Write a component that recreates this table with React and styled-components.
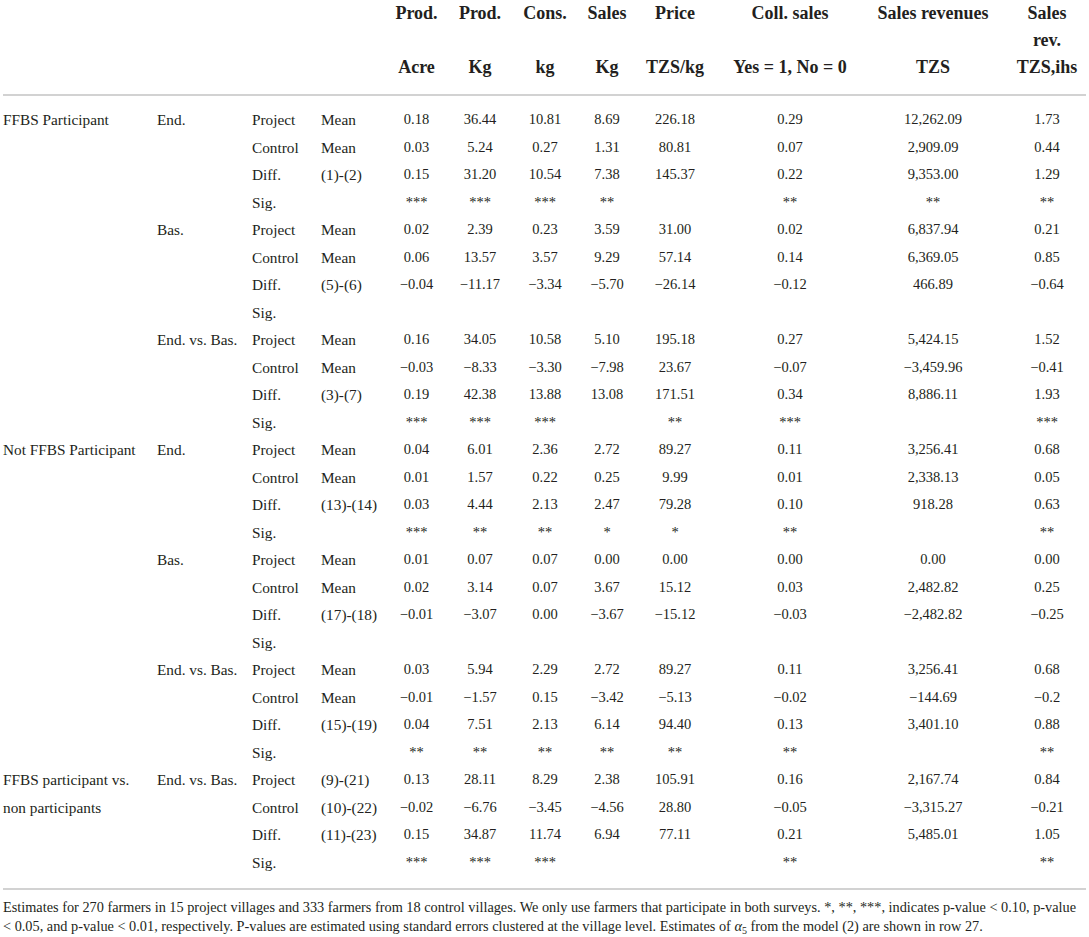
import React from "react";
import styled, { createGlobalStyle } from "styled-components";

const GlobalStyle = createGlobalStyle`
  html, body { margin: 0; padding: 0; background: #ffffff; }
  body {
    font-family: "Liberation Serif", "Times New Roman", serif;
    color: #231f20;
  }
`;

const Page = styled.div`
  padding: 0 3px;
  width: 1083px;
`;

const Table = styled.table`
  width: 1083px;
  table-layout: fixed;
  border-collapse: collapse;
`;

const Col = styled.col`
  width: ${(p) => p.$w}px;
`;

const HeadCell = styled.th`
  padding: 0 0 13px ${(p) => p.$pl || 0}px;
  border-bottom: 2px solid #d2d2d2;
  vertical-align: top;
  font-weight: 700;
  font-size: 18px;
  line-height: 27px;
  text-align: center;
`;

const HeadStack = styled.div`
  display: flex;
  flex-direction: column;
  justify-content: space-between;
  align-items: center;
  height: 81px;
  white-space: nowrap;
`;

const Row = styled.tr`
  & > td {
    padding-top: ${(p) => (p.$first ? 10 : 0)}px;
    padding-bottom: ${(p) => (p.$last ? 12 : 0)}px;
  }
`;

const LabelCell = styled.td`
  text-align: left;
  vertical-align: top;
  font-size: 15.3px;
  line-height: 27.5px;
  padding-left: 0;
  padding-right: ${(p) => p.$pr || 0}px;
`;

const NumCell = styled.td`
  text-align: center;
  vertical-align: top;
  font-size: 14.5px;
  line-height: 27.5px;
  white-space: nowrap;
  padding-left: ${(p) => p.$pl || 0}px;
  padding-right: 0;
`;

const Footnote = styled.p`
  margin: 0;
  border-top: 2px solid #d2d2d2;
  padding-top: 8px;
  font-size: 14.3px;
  line-height: 19px;
`;

const Alpha = styled.i`
  font-style: italic;
`;

const Sub = styled.sub`
  font-size: 10px;
  line-height: 0;
  vertical-align: -3px;
`;

const widths = [154, 95, 69, 64, 63, 64, 66, 58, 78, 152, 134, 86];

const headers = [
  { name: ["Prod."], unit: "Acre" },
  { name: ["Prod."], unit: "Kg" },
  { name: ["Cons."], unit: "kg" },
  { name: ["Sales"], unit: "Kg" },
  { name: ["Price"], unit: "TZS/kg" },
  { name: ["Coll. sales"], unit: "Yes = 1, No = 0" },
  { name: ["Sales revenues"], unit: "TZS" },
  { name: ["Sales", "rev."], unit: "TZS,ihs" },
];

const blank = ["", "", "", "", "", "", "", ""];

const groups = [
  {
    label: "FFBS Participant",
    subs: [
      {
        period: "End.",
        rows: [
          ["Project", "Mean", "0.18", "36.44", "10.81", "8.69", "226.18", "0.29", "12,262.09", "1.73"],
          ["Control", "Mean", "0.03", "5.24", "0.27", "1.31", "80.81", "0.07", "2,909.09", "0.44"],
          ["Diff.", "(1)-(2)", "0.15", "31.20", "10.54", "7.38", "145.37", "0.22", "9,353.00", "1.29"],
          ["Sig.", "", "***", "***", "***", "**", "", "**", "**", "**"],
        ],
      },
      {
        period: "Bas.",
        rows: [
          ["Project", "Mean", "0.02", "2.39", "0.23", "3.59", "31.00", "0.02", "6,837.94", "0.21"],
          ["Control", "Mean", "0.06", "13.57", "3.57", "9.29", "57.14", "0.14", "6,369.05", "0.85"],
          ["Diff.", "(5)-(6)", "−0.04", "−11.17", "−3.34", "−5.70", "−26.14", "−0.12", "466.89", "−0.64"],
          ["Sig.", "", ...blank],
        ],
      },
      {
        period: "End. vs. Bas.",
        rows: [
          ["Project", "Mean", "0.16", "34.05", "10.58", "5.10", "195.18", "0.27", "5,424.15", "1.52"],
          ["Control", "Mean", "−0.03", "−8.33", "−3.30", "−7.98", "23.67", "−0.07", "−3,459.96", "−0.41"],
          ["Diff.", "(3)-(7)", "0.19", "42.38", "13.88", "13.08", "171.51", "0.34", "8,886.11", "1.93"],
          ["Sig.", "", "***", "***", "***", "", "**", "***", "", "***"],
        ],
      },
    ],
  },
  {
    label: "Not FFBS Participant",
    subs: [
      {
        period: "End.",
        rows: [
          ["Project", "Mean", "0.04", "6.01", "2.36", "2.72", "89.27", "0.11", "3,256.41", "0.68"],
          ["Control", "Mean", "0.01", "1.57", "0.22", "0.25", "9.99", "0.01", "2,338.13", "0.05"],
          ["Diff.", "(13)-(14)", "0.03", "4.44", "2.13", "2.47", "79.28", "0.10", "918.28", "0.63"],
          ["Sig.", "", "***", "**", "**", "*", "*", "**", "", "**"],
        ],
      },
      {
        period: "Bas.",
        rows: [
          ["Project", "Mean", "0.01", "0.07", "0.07", "0.00", "0.00", "0.00", "0.00", "0.00"],
          ["Control", "Mean", "0.02", "3.14", "0.07", "3.67", "15.12", "0.03", "2,482.82", "0.25"],
          ["Diff.", "(17)-(18)", "−0.01", "−3.07", "0.00", "−3.67", "−15.12", "−0.03", "−2,482.82", "−0.25"],
          ["Sig.", "", ...blank],
        ],
      },
      {
        period: "End. vs. Bas.",
        rows: [
          ["Project", "Mean", "0.03", "5.94", "2.29", "2.72", "89.27", "0.11", "3,256.41", "0.68"],
          ["Control", "Mean", "−0.01", "−1.57", "0.15", "−3.42", "−5.13", "−0.02", "−144.69", "−0.2"],
          ["Diff.", "(15)-(19)", "0.04", "7.51", "2.13", "6.14", "94.40", "0.13", "3,401.10", "0.88"],
          ["Sig.", "", "**", "**", "**", "**", "**", "**", "", "**"],
        ],
      },
    ],
  },
  {
    label: "FFBS participant vs. non participants",
    subs: [
      {
        period: "End. vs. Bas.",
        rows: [
          ["Project", "(9)-(21)", "0.13", "28.11", "8.29", "2.38", "105.91", "0.16", "2,167.74", "0.84"],
          ["Control", "(10)-(22)", "−0.02", "−6.76", "−3.45", "−4.56", "28.80", "−0.05", "−3,315.27", "−0.21"],
          ["Diff.", "(11)-(23)", "0.15", "34.87", "11.74", "6.94", "77.11", "0.21", "5,485.01", "1.05"],
          ["Sig.", "", "***", "***", "***", "", "", "**", "", "**"],
        ],
      },
    ],
  },
];

const totalRows = groups.reduce(
  (n, g) => n + g.subs.reduce((m, s) => m + s.rows.length, 0),
  0
);

export default function App() {
  const body = [];
  let index = 0;
  groups.forEach((g, gi) => {
    const groupSpan = g.subs.reduce((m, s) => m + s.rows.length, 0);
    g.subs.forEach((s, si) => {
      s.rows.forEach((r, ri) => {
        const first = index === 0;
        const last = index === totalRows - 1;
        body.push(
          <Row key={`${gi}-${si}-${ri}`} $first={first} $last={last}>
            {si === 0 && ri === 0 && (
              <LabelCell rowSpan={groupSpan} $pr={18}>
                {g.label}
              </LabelCell>
            )}
            {ri === 0 && <LabelCell rowSpan={s.rows.length}>{s.period}</LabelCell>}
            <LabelCell>{r[0]}</LabelCell>
            <LabelCell>{r[1]}</LabelCell>
            {r.slice(2).map((v, vi) => (
              <NumCell key={vi} $pl={vi === 7 ? 8 : 0}>
                {v}
              </NumCell>
            ))}
          </Row>
        );
        index += 1;
      });
    });
  });

  return (
    <Page>
      <GlobalStyle />
      <Table>
        <colgroup>
          {widths.map((w, i) => (
            <Col key={i} $w={w} />
          ))}
        </colgroup>
        <thead>
          <tr>
            <HeadCell />
            <HeadCell />
            <HeadCell />
            <HeadCell />
            {headers.map((h, i) => (
              <HeadCell key={i} $pl={i === 7 ? 8 : 0}>
                <HeadStack>
                  <div>
                    {h.name.map((line, li) => (
                      <div key={li}>{line}</div>
                    ))}
                  </div>
                  <div>{h.unit}</div>
                </HeadStack>
              </HeadCell>
            ))}
          </tr>
        </thead>
        <tbody>{body}</tbody>
      </Table>
      <Footnote>
        Estimates for 270 farmers in 15 project villages and 333 farmers from 18 control villages. We only use farmers that participate in both surveys. *, **, ***, indicates p-value &lt; 0.10, p-value{" "}
        {"<\u00a00.05,"} and p-value &lt; 0.01, respectively. P-values are estimated using standard errors clustered at the village level. Estimates of <Alpha>α</Alpha>
        <Sub>5</Sub> from the model (2) are shown in row 27.
      </Footnote>
    </Page>
  );
}
